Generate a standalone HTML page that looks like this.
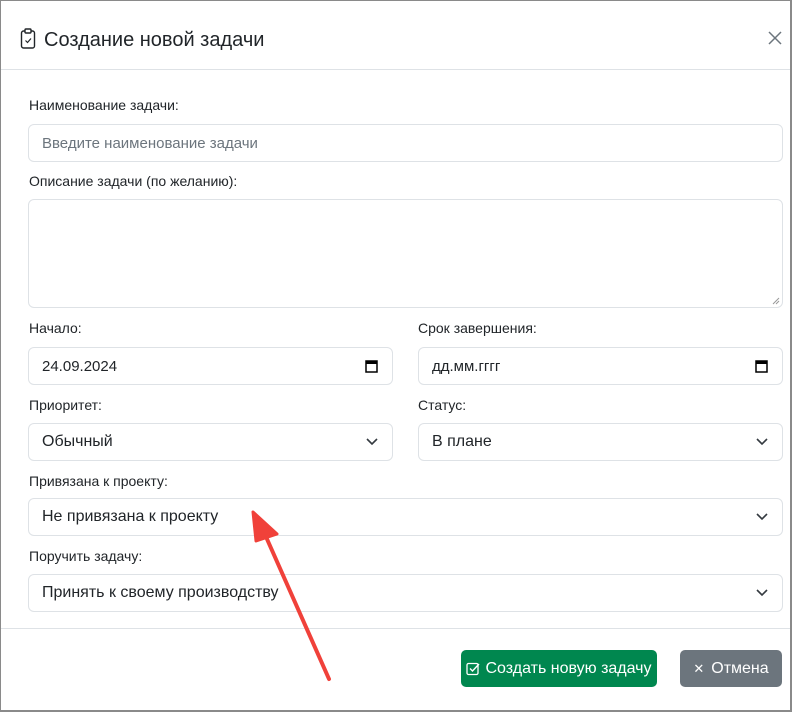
<!DOCTYPE html>
<html><head><meta charset="utf-8"><style>
*{box-sizing:border-box;margin:0;padding:0}
body{width:792px;height:712px;background:#fff;font-family:"Segoe UI","Liberation Sans","DejaVu Sans",sans-serif;color:#212529;position:relative;overflow:hidden}
.frame{position:absolute;left:0;top:0;width:792px;height:712px;border:1px solid #8a8a8a;border-width:1px 2px 2px 1px}
.abs{position:absolute}
.lbl{position:absolute;font-size:14px;color:#212529;line-height:18px}
.in{position:absolute;border:1px solid #dee2e6;border-radius:6px;background:#fff;font-size:16px;padding-left:13px;display:flex;align-items:center}
.chev{position:absolute;right:14px;top:50%;margin-top:-5px}
.cal{position:absolute;right:14px;top:50%;margin-top:-7px}
</style></head><body>
<div class="frame"></div>
<svg class="abs" style="left:20px;top:28px" width="16" height="22" viewBox="0 0 16 22"><rect x="1.5" y="3" width="13" height="17" rx="2" fill="none" stroke="#212529" stroke-width="1.4"/><rect x="5" y="1" width="6" height="4" rx="1" fill="#fff" stroke="#212529" stroke-width="1.4"/><path d="M5.5 12.5l2 2 3.5-4" fill="none" stroke="#212529" stroke-width="1.2"/></svg>
<div class="abs" style="left:44px;top:27px;font-size:20px;font-weight:500;line-height:26px">Создание новой задачи</div>
<svg class="abs" style="left:768px;top:31px" width="14" height="14" viewBox="0 0 14 14"><path d="M1 1L13 13M13 1L1 13" stroke="#6c757d" stroke-width="1.5"/></svg>
<div class="abs" style="left:1px;top:69px;width:789px;height:1px;background:#dee2e6"></div>

<div class="lbl" style="left:29px;top:96px">Наименование задачи:</div>
<div class="in" style="left:28px;top:124px;width:755px;height:38px;color:#6c757d;font-size:15px">Введите наименование задачи</div>
<div class="lbl" style="left:29px;top:172px">Описание задачи (по желанию):</div>
<div class="in" style="left:28px;top:199px;width:755px;height:109px"><svg class="abs" style="right:2px;bottom:2px" width="8" height="8"><path d="M7 1L1 7M7 4L4 7" stroke="#999" stroke-width="1"/></svg></div>

<div class="lbl" style="left:29px;top:319px">Начало:</div>
<div class="lbl" style="left:418px;top:319px">Срок завершения:</div>
<div class="in" style="left:28px;top:347px;width:365px;height:38px;font-size:15px">24.09.2024<svg class="cal" width="13" height="14" viewBox="0 0 13 14"><rect x="1" y="2" width="11" height="11" fill="none" stroke="#000" stroke-width="1.5"/><rect x="1" y="2" width="11" height="3" fill="#000"/></svg></div>
<div class="in" style="left:418px;top:347px;width:365px;height:38px;font-size:15px">дд.мм.гггг<svg class="cal" width="13" height="14" viewBox="0 0 13 14"><rect x="1" y="2" width="11" height="11" fill="none" stroke="#000" stroke-width="1.5"/><rect x="1" y="2" width="11" height="3" fill="#000"/></svg></div>

<div class="lbl" style="left:29px;top:396px">Приоритет:</div>
<div class="lbl" style="left:418px;top:396px">Статус:</div>
<div class="in" style="left:28px;top:423px;width:365px;height:38px">Обычный<svg class="chev" width="12" height="9" viewBox="0 0 12 9"><path d="M1 2l5 5 5-5" fill="none" stroke="#343a40" stroke-width="1.6"/></svg></div>
<div class="in" style="left:418px;top:423px;width:365px;height:38px">В плане<svg class="chev" width="12" height="9" viewBox="0 0 12 9"><path d="M1 2l5 5 5-5" fill="none" stroke="#343a40" stroke-width="1.6"/></svg></div>

<div class="lbl" style="left:29px;top:472px">Привязана к проекту:</div>
<div class="in" style="left:28px;top:498px;width:755px;height:38px">Не привязана к проекту<svg class="chev" width="12" height="9" viewBox="0 0 12 9"><path d="M1 2l5 5 5-5" fill="none" stroke="#343a40" stroke-width="1.6"/></svg></div>
<div class="lbl" style="left:29px;top:547px">Поручить задачу:</div>
<div class="in" style="left:28px;top:574px;width:755px;height:38px">Принять к своему производству<svg class="chev" width="12" height="9" viewBox="0 0 12 9"><path d="M1 2l5 5 5-5" fill="none" stroke="#343a40" stroke-width="1.6"/></svg></div>

<div class="abs" style="left:1px;top:628px;width:789px;height:1px;background:#dee2e6"></div>
<div class="abs" style="left:461px;top:650px;width:196px;height:37px;background:#198754;background:#00874f;border-radius:5px;color:#fff;font-size:16px;display:flex;align-items:center;justify-content:center;gap:5px"><svg width="14" height="14" viewBox="0 0 14 14"><rect x="1" y="1.5" width="11" height="11" rx="1.5" fill="none" stroke="#fff" stroke-width="1.3"/><path d="M4 6.5l2.5 2.5L13 2" fill="none" stroke="#fff" stroke-width="1.4"/></svg>Создать новую задачу</div>
<div class="abs" style="left:680px;top:650px;width:102px;height:37px;background:#6c757d;border-radius:5px;color:#fff;font-size:16px;display:flex;align-items:center;justify-content:center;gap:7px"><span style="font-size:13px">✕</span>Отмена</div>

<svg class="abs" style="left:0;top:0" width="792" height="712"><path d="M329 679L263 530" stroke="#f0413a" stroke-width="4" stroke-linecap="round"/><path d="M253 512L277 534L256 541Z" fill="#f0413a" stroke="#f0413a" stroke-width="3" stroke-linejoin="round"/></svg>
</body></html>
